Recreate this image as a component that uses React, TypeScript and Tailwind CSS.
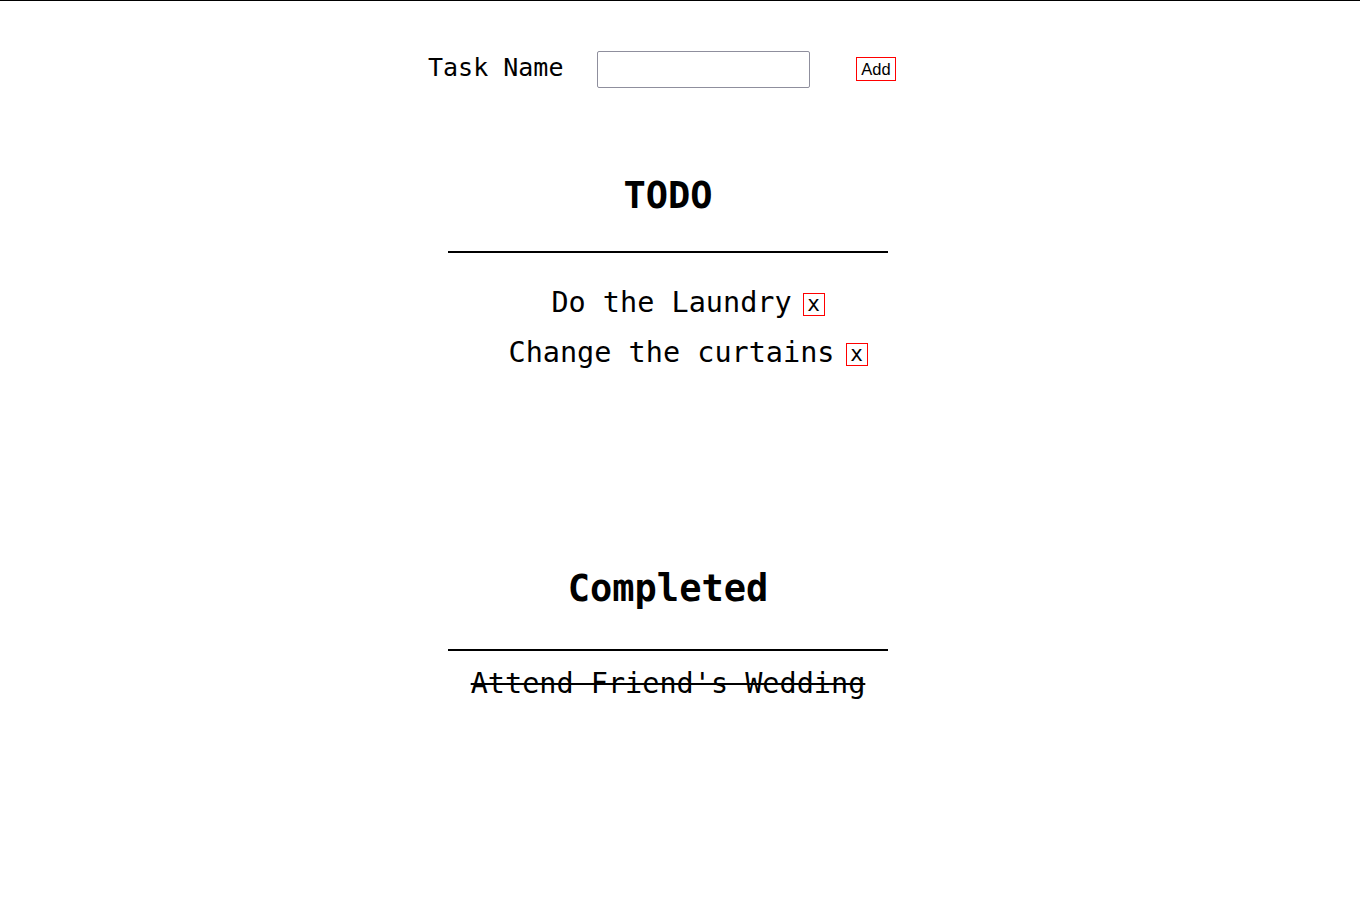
import { useState } from "react";

const mono = "font-['DejaVu_Sans_Mono',monospace]";

export default function App() {
	const [taskName, setTaskName] = useState("");
	const [todos, setTodos] = useState(["Do the Laundry", "Change the curtains"]);
	const [completed] = useState(["Attend Friend's Wedding"]);

	const addTask = () => {
		if (!taskName.trim()) return;
		setTodos((prev) => [...prev, taskName.trim()]);
		setTaskName("");
	};

	const removeTask = (index: number) =>
		setTodos((prev) => prev.filter((_, i) => i !== index));

	return (
		<div className={`min-h-screen border-t border-black bg-white text-black ${mono}`}>
			<div className="ml-[448px] w-[440px]">
				{/* Task input */}
				<div className="-ml-[20px] mt-[50px] flex w-[480px] items-start">
					<label className="mt-[4px] block w-[169px] shrink-0 text-[25px] leading-[25px]">
						Task Name
					</label>
					<input
						type="text"
						value={taskName}
						onChange={(e) => setTaskName(e.target.value)}
						className="h-[37px] w-[213px] shrink-0 rounded-[2px] border border-[#8f8f9d] bg-white px-2 text-base outline-none"
					/>
					<button
						onClick={addTask}
						className="ml-[46px] mt-[6px] flex h-[24px] w-[40px] shrink-0 items-center justify-center border border-[#ff0000] bg-white pt-[1px] font-['Liberation_Sans',Arial,sans-serif] text-[16.5px] leading-none"
					>
						Add
					</button>
				</div>

				{/* TODO list */}
				<h1 className="mt-[86px] text-center text-[37px] font-bold leading-[44px]">
					TODO
				</h1>
				<hr className="mt-[33px] h-[2px] border-0 bg-black" />
				<ul className="mt-[25px] pl-10">
					{todos.map((todo, index) => (
						<li
							key={todo + index}
							className="flex h-[50px] items-center justify-center gap-[11px] text-[28.5px] leading-[50px]"
						>
							<span>{todo}</span>
							<button
								onClick={() => removeTask(index)}
								className="mt-[2px] flex h-[23px] w-[22px] items-center justify-center border border-[#ff0000] text-[21px] leading-none"
							>
								x
							</button>
						</li>
					))}
				</ul>

				{/* Completed list */}
				<h1 className="mt-[189px] text-center text-[37px] font-bold leading-[44px]">
					Completed
				</h1>
				<hr className="mt-[38px] h-[2px] border-0 bg-black" />
				<ul className="mt-[8px]">
					{completed.map((task) => (
						<li
							key={task}
							className="h-[50px] text-center text-[28.5px] leading-[50px] line-through"
						>
							{task}
						</li>
					))}
				</ul>
			</div>
		</div>
	);
}
